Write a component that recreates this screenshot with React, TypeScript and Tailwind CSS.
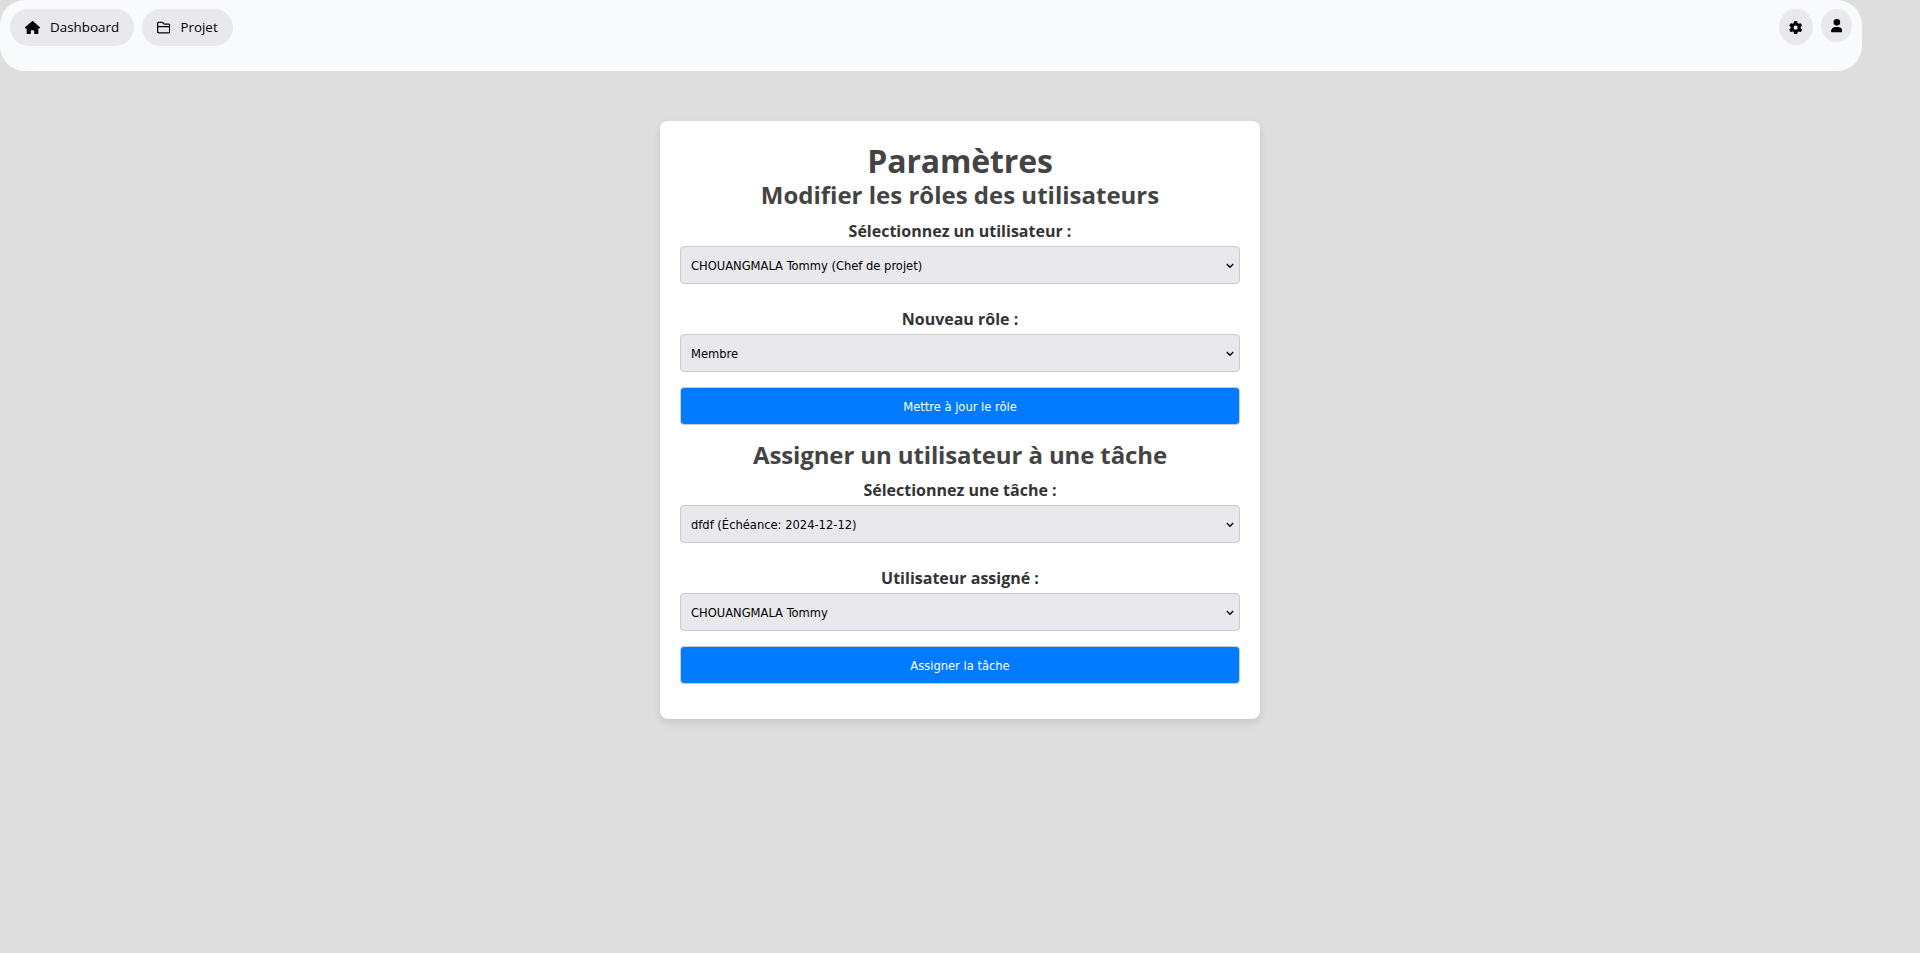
import type { ReactNode } from "react";
import { FaGear, FaHouse, FaRegFolderClosed, FaUser } from "react-icons/fa6";

function NavButton({ icon, label }: { icon: ReactNode; label: string }) {
  return (
    <button className="flex h-[37px] items-center gap-[10px] rounded-full bg-[#e9e9ed] px-[15px] font-['Open_Sans',sans-serif] text-[13.4px] font-medium text-black">
      {icon}
      <span>{label}</span>
    </button>
  );
}

function Field({ label, value }: { label: string; value: string }) {
  return (
    <div className="flex flex-col">
      <label className="text-center font-['Open_Sans',sans-serif] text-[16px] leading-[20px] font-bold text-[#333]">
        {label}
      </label>
      <div className="mt-[5px] flex h-[38px] items-center justify-between rounded-[4px] border border-[#ccc] bg-[#e9e9ed] pr-[5px] pl-[10px] font-['DejaVu_Sans_Condensed','DejaVu_Sans',sans-serif] text-[12.8px] text-black">
        <span className="pt-[2px]">{value}</span>
        <svg className="mt-px h-[6px] w-[8px]" viewBox="0 0 8 6" fill="none" stroke="black" strokeWidth="1.4">
          <path d="M0.8 1L4 4.2L7.2 1" />
        </svg>
      </div>
    </div>
  );
}

function Submit({ label }: { label: string }) {
  return (
    <button className="mt-[15px] h-[38px] w-full rounded-[4px] border border-[#ccc] bg-[#007bff] pt-[2px] font-['DejaVu_Sans_Condensed','DejaVu_Sans',sans-serif] text-[12.8px] text-white">
      {label}
    </button>
  );
}

export default function App() {
  return (
    <div className="flex min-h-screen flex-col items-center bg-[#dedede]">
      <header className="flex h-[71px] w-[1862px] items-start justify-between self-start rounded-[25px] bg-[#f8fafc] px-[10px] pt-[9px]">
        <nav className="flex gap-2">
          <NavButton icon={<FaHouse className="h-[13.3px] w-[15px]" />} label="Dashboard" />
          <NavButton icon={<FaRegFolderClosed className="h-[13.3px] w-[13.3px]" />} label="Projet" />
        </nav>
        <div className="flex items-start gap-2">
          <button className="flex h-9 w-[34px] items-center justify-center rounded-[50%] bg-[#e9e9ed] pt-px text-black">
            <FaGear className="size-[13.3px]" />
          </button>
          <button className="flex h-[33px] w-[31px] items-center justify-center rounded-[50%] bg-[#e9e9ed] pt-px text-black">
            <FaUser className="h-[13.3px] w-[11.7px]" />
          </button>
        </div>
      </header>

      <main className="mt-[50px] h-[598px] w-[600px] rounded-[8px] bg-white px-5 pt-5 shadow-[0_4px_8px_rgba(0,0,0,0.1)]">
        <h1 className="text-center font-['Open_Sans',sans-serif] text-[32px] leading-[39px] font-bold tracking-[-0.15px] text-[#444]">
          Paramètres
        </h1>
        <h2 className="text-center font-['Open_Sans',sans-serif] text-[24px] leading-[30px] font-bold text-[#444]">
          Modifier les rôles des utilisateurs
        </h2>
        <div className="mt-[11px] flex flex-col gap-[25px]">
          <Field label="Sélectionnez un utilisateur :" value="CHOUANGMALA Tommy (Chef de projet)" />
          <Field label="Nouveau rôle :" value="Membre" />
        </div>
        <Submit label="Mettre à jour le rôle" />
        <h2 className="mt-[15px] text-center font-['Open_Sans',sans-serif] text-[24px] leading-[30px] font-bold tracking-[-0.12px] text-[#444]">
          Assigner un utilisateur à une tâche
        </h2>
        <div className="mt-[10px] flex flex-col gap-[25px]">
          <Field label="Sélectionnez une tâche :" value="dfdf (Échéance: 2024-12-12)" />
          <Field label="Utilisateur assigné :" value="CHOUANGMALA Tommy" />
        </div>
        <Submit label="Assigner la tâche" />
      </main>
    </div>
  );
}
